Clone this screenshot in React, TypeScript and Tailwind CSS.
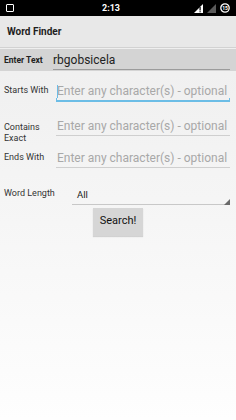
import React from 'react';

const font = { fontFamily: 'Roboto, "Noto Sans", sans-serif' };

const StatusBar = () => (
  <div className="h-[16px] bg-black flex items-center justify-between px-[6px] text-white">
    <div className="w-[8px] h-[8px] border-[1.5px] border-white rounded-[1px]" />
    <span className="text-[9px] font-bold leading-none ml-[14px]">2:13</span>
    <div className="flex items-center gap-[4px]">
      <svg width="9" height="9" viewBox="0 0 9 9">
        <polygon points="9,0 9,9 0,9" fill="#ffffff" />
        <rect x="5.5" y="3" width="1.2" height="3.5" fill="#000" />
        <rect x="5.5" y="7.2" width="1.2" height="1.1" fill="#000" />
      </svg>
      <svg width="9" height="9" viewBox="0 0 9 9">
        <polygon points="9,0 9,9 0,9" fill="#5a5a5a" />
      </svg>
      <svg width="10" height="10" viewBox="0 0 10 10">
        <circle cx="5" cy="5" r="4.2" fill="none" stroke="#fff" strokeWidth="1.3" />
        <text x="5" y="6.9" fontSize="5" textAnchor="middle" fill="#fff" fontWeight="bold" fontFamily="Roboto, sans-serif">15</text>
      </svg>
    </div>
  </div>
);

const Field = ({ active }: { active?: boolean }) => (
  <div className="flex-1 relative">
    <div className="text-[12px] leading-[14px] text-[#a8a8a8] whitespace-nowrap pl-[1px] pb-[2px]">
      Enter any character(s) - optional
    </div>
    {active ? (
      <>
        <div className="h-[1.5px] bg-[#6cbde6]" />
        <div className="absolute left-0 bottom-0 w-[1px] h-[4px] bg-[#6cbde6]" />
        <div className="absolute right-0 bottom-0 w-[1px] h-[4px] bg-[#6cbde6]" />
        <div className="absolute left-[1px] top-[1px] w-[1px] h-[13px] bg-[#6cbde6]" />
      </>
    ) : (
      <div className="h-[1px] bg-[#cfcfcf]" />
    )}
  </div>
);

export default function App() {
  return (
    <div className="w-[236px] h-[420px] flex flex-col overflow-hidden" style={font}>
      <StatusBar />
      <div className="h-[32px] bg-[#e8e8e8] border-b border-[#d2d2d2] flex items-center px-[7px]">
        <span className="text-[10px] font-bold text-[#1e1e1e]">Word Finder</span>
      </div>
      <div className="flex-1 bg-gradient-to-b from-[#efefef] to-[#fefefe] flex flex-col">
        <div className="mt-[1px] h-[22px] bg-[#d4d4d4] flex items-center pl-[4px] pr-[6px]">
          <span className="w-[49px] text-[8.5px] font-bold text-[#222]">Enter Text</span>
          <div className="flex-1 pt-[2px]">
            <div className="text-[12px] leading-[14px] text-[#222] pb-[2px]">rbgobsicela</div>
            <div className="h-[1px] bg-[#9c9c9c]" />
          </div>
        </div>

        <div className="mt-[13px] flex items-end pl-[4px] pr-[6px]">
          <span className="w-[52px] text-[9px] text-[#333] pb-[4px]">Starts With</span>
          <Field active />
        </div>

        <div className="mt-[17px] flex items-start pl-[4px] pr-[6px]">
          <span className="w-[52px] text-[9px] leading-[11px] text-[#333] pt-[3px]">
            Contains
            <br />
            Exact
          </span>
          <Field />
        </div>

        <div className="mt-[7px] flex items-end pl-[4px] pr-[6px]">
          <span className="w-[52px] text-[9px] text-[#333] pb-[4px]">Ends With</span>
          <Field />
        </div>

        <div className="mt-[19px] flex items-end pl-[4px] pr-[6px]">
          <span className="w-[68px] text-[9px] text-[#333] pb-[4px]">Word Length</span>
          <div className="flex-1 relative">
            <div className="text-[9.5px] leading-[12px] text-[#222] pl-[5px] pb-[3px]">All</div>
            <div className="h-[1px] bg-[#c8c8c8]" />
            <svg className="absolute right-0 bottom-0" width="6" height="6" viewBox="0 0 6 6">
              <polygon points="6,0 6,6 0,6" fill="#6a6a6a" />
            </svg>
          </div>
        </div>

        <div className="mt-[3px] flex justify-center">
          <button className="w-[50px] h-[28px] bg-[#d6d6d6] text-[11px] text-[#111] shadow-[0_1px_1px_rgba(0,0,0,0.15)]">
            Search!
          </button>
        </div>
      </div>
    </div>
  );
}
